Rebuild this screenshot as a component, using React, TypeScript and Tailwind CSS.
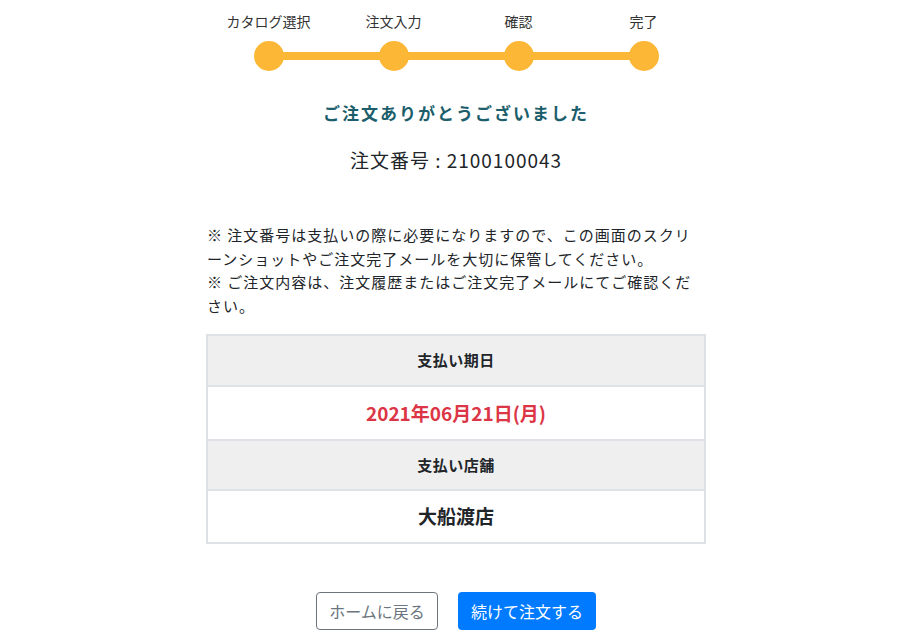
import React from 'react';

const steps = ['カタログ選択', '注文入力', '確認', '完了'];

const Stepper: React.FC = () => {
  return (
    <div className="relative w-[500px]">
      <div className="grid grid-cols-4">
        {steps.map((s) => (
          <div key={s} className="flex flex-col items-center">
            <span className="text-[14px] leading-[20px] text-[#333]">{s}</span>
            <span className="relative z-10 mt-[10px] h-[30px] w-[30px] rounded-full bg-[#fcb736]"></span>
          </div>
        ))}
      </div>
      <div className="absolute left-[62.5px] right-[62.5px] top-[41px] h-[8px] bg-[#fcb736]"></div>
    </div>
  );
};

const App: React.FC = () => {
  return (
    <div
      className="min-h-[644px] bg-white flex justify-center pr-[6px] text-[#212529]"
      style={{ fontFamily: '"Noto Sans CJK JP", "Noto Sans", sans-serif' }}
    >
      <div className="w-[500px] pt-[11px] flex flex-col items-center">
        <Stepper />

        <h1 className="mt-[30px] text-[17px] leading-[24px] font-bold tracking-[2px] text-[#1c5e6b]">
          ご注文ありがとうございました
        </h1>
        <p className="mt-[22px] text-[19px] leading-[26px] tracking-[1px]">注文番号 : 2100100043</p>

        <div className="mt-[50px] w-full pl-[1px] text-[15px] leading-[23.5px] tracking-[1px]">
          <p>※ 注文番号は支払いの際に必要になりますので、この画面のスクリーンショットやご注文完了メールを大切に保管してください。</p>
          <p>※ ご注文内容は、注文履歴またはご注文完了メールにてご確認ください。</p>
        </div>

        <div className="mt-[17px] w-full border-2 border-[#dee2e6] text-center">
          <div className="h-[49px] flex items-center justify-center bg-[#efefef] text-[15px] font-bold tracking-[0.5px]">
            支払い期日
          </div>
          <div className="h-[54px] flex items-center justify-center border-t-2 border-[#dee2e6] text-[19px] font-bold text-[#dc3545]">
            2021年06月21日(月)
          </div>
          <div className="h-[50px] flex items-center justify-center border-t-2 border-[#dee2e6] bg-[#efefef] text-[15px] font-bold tracking-[0.5px]">
            支払い店舗
          </div>
          <div className="h-[53px] flex items-center justify-center border-t-2 border-[#dee2e6] text-[19px] font-bold">
            大船渡店
          </div>
        </div>

        <div className="mt-[48px] flex gap-[20px]">
          <button className="h-[38px] w-[122px] rounded-[4px] border border-[#6c757d] bg-white text-[16px] text-[#6c757d]">
            ホームに戻る
          </button>
          <button className="h-[38px] w-[138px] rounded-[4px] bg-[#007bff] text-[16px] text-white">
            続けて注文する
          </button>
        </div>
      </div>
    </div>
  );
};

export default App;
